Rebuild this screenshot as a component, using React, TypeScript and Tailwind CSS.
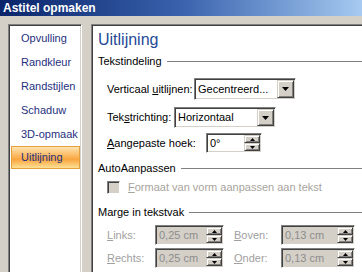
import React from "react";

const sunken =
  "border border-t-[#808080] border-l-[#808080] border-r-white border-b-white shadow-[inset_1px_1px_0_#404040,inset_-1px_-1px_0_#d4d0c8] p-px";
const sunkenBox =
  "border border-t-[#808080] border-l-[#808080] border-r-white border-b-white shadow-[inset_1px_1px_0_#404040,inset_-1px_-1px_0_#d4d0c8]";
const raised =
  "border border-t-[#d4d0c8] border-l-[#d4d0c8] border-r-[#404040] border-b-[#404040] shadow-[inset_1px_1px_0_#ffffff,inset_-1px_-1px_0_#808080] bg-[#d4d0c8]";

function DownTri({ w = 7, h = 4 }: { w?: number; h?: number }) {
  return (
    <svg width={w} height={h} viewBox={`0 0 ${w} ${h}`}>
      <polygon points={`0,0 ${w},0 ${w / 2},${h}`} fill="#000" />
    </svg>
  );
}
function UpTri({ w = 5, h = 3 }: { w?: number; h?: number }) {
  return (
    <svg width={w} height={h} viewBox={`0 0 ${w} ${h}`}>
      <polygon points={`0,${h} ${w},${h} ${w / 2},0`} fill="#000" />
    </svg>
  );
}

function Select({ className, value }: { className: string; value: string }) {
  return (
    <div className={`${sunken} ${className} bg-white flex items-stretch shrink-0`}>
      <div className="flex-1 flex items-center pl-[2px] text-black whitespace-nowrap overflow-hidden">{value}</div>
      <div className={`${raised} w-[17px] flex items-center justify-center`}>
        <DownTri />
      </div>
    </div>
  );
}

function Spinner({
  className,
  value,
  disabled,
}: {
  className: string;
  value: string;
  disabled?: boolean;
}) {
  return (
    <div
      className={`${sunken} ${className} ${disabled ? "bg-[#d4d0c8] text-[#8c8c8c]" : "bg-white text-black"} flex items-stretch shrink-0`}
    >
      <div className="flex-1 flex items-center pl-[2px] whitespace-nowrap overflow-hidden">{value}</div>
      <div className="w-[16px] flex flex-col">
        <div className={`${raised} flex-1 flex items-center justify-center`}>
          <UpTri />
        </div>
        <div className={`${raised} flex-1 flex items-center justify-center`}>
          <DownTri w={5} h={3} />
        </div>
      </div>
    </div>
  );
}

function Header({ children }: { children: React.ReactNode }) {
  return (
    <div className="h-[13px] flex items-center">
      <span className="whitespace-nowrap text-black">{children}</span>
      <div className="flex-1 h-px bg-[#808080] ml-[5px]" />
    </div>
  );
}

const navItems = ["Opvulling", "Randkleur", "Randstijlen", "Schaduw", "3D-opmaak"];

export default function App() {
  return (
    <div className="w-[362px] h-[272px] overflow-hidden bg-[#d4d0c8] font-['Liberation_Sans',Arial,sans-serif] text-[11px] leading-[13px]">
      <div className="h-[16px] bg-gradient-to-r from-[#0a246a] via-[#3a62ad] to-[#a6caf0] flex items-center pl-[3px]">
        <span className="text-white font-bold text-[12px] leading-[14px] whitespace-nowrap">Astitel opmaken</span>
      </div>
      <div className="flex pt-[8px] pl-[8px]">
        <div className={`${sunkenBox} w-[74px] h-[260px] bg-white pt-px shrink-0`}>
          {navItems.map((t) => (
            <div key={t} className="h-[24px] flex items-center pl-[12px] text-[#1f3181] whitespace-nowrap">
              {t}
            </div>
          ))}
          <div className="h-[24px] pl-[2px] pr-px">
            <div className="h-[23px] flex items-center pl-[9px] text-[#1f3181] border border-[#e3a03c] bg-[linear-gradient(to_bottom,#fde4b2_0%,#fbb458_45%,#f9a640_60%,#fde196_100%)]">
              Uitlijning
            </div>
          </div>
        </div>
        <div className="w-[9px] shrink-0" />
        <div className="border border-t-[#808080] border-l-[#808080] border-r-white border-b-white shadow-[inset_1px_1px_0_#404040] w-[290px] h-[260px] bg-white pl-[6px] shrink-0 flex flex-col">
          <div className="pt-[6px] text-[16px] leading-[18px] text-[#244a96]">Uitlijning</div>
          <div className="mt-[6px]">
            <Header>Tekstindeling</Header>
          </div>
          <div className="mt-[10px] h-[22px] flex items-center pl-[9px]">
            <span className="w-[87px] shrink-0 whitespace-nowrap">
              Verticaal <u>u</u>itlijnen:
            </span>
            <Select className="w-[102px] h-[22px]" value="Gecentreerd..." />
          </div>
          <div className="mt-[7px] h-[21px] flex items-center pl-[9px]">
            <span className="w-[67px] shrink-0 whitespace-nowrap">
              Tek<u>s</u>trichting:
            </span>
            <Select className="w-[102px] h-[21px]" value="Horizontaal" />
          </div>
          <div className="mt-[5px] h-[20px] flex items-center pl-[9px]">
            <span className="w-[99px] shrink-0 whitespace-nowrap">
              <u>A</u>angepaste hoek:
            </span>
            <Spinner className="w-[56px] h-[20px]" value="0°" />
          </div>
          <div className="mt-[9px]">
            <Header>AutoAanpassen</Header>
          </div>
          <div className="mt-[6px] h-[13px] flex items-center pl-[9px] text-[#a7a49c]">
            <div className={`${sunkenBox} w-[13px] h-[13px] bg-[#d4d0c8] shrink-0`} />
            <span className="ml-[8px] whitespace-nowrap">
              <u>F</u>ormaat van vorm aanpassen aan tekst
            </span>
          </div>
          <div className="mt-[12px]">
            <Header>Marge in tekstvak</Header>
          </div>
          <div className="mt-[6px] h-[20px] flex items-center pl-[9px] text-[#a0a0a0]">
            <span className="w-[48px] shrink-0">
              <u>L</u>inks:
            </span>
            <Spinner className="w-[69px] h-[20px]" value="0,25 cm" disabled />
            <span className="w-[47px] ml-[10px] shrink-0">
              <u>B</u>oven:
            </span>
            <Spinner className="w-[74px] h-[20px]" value="0,13 cm" disabled />
          </div>
          <div className="mt-[3px] h-[20px] flex items-center pl-[9px] text-[#a0a0a0]">
            <span className="w-[48px] shrink-0">
              <u>R</u>echts:
            </span>
            <Spinner className="w-[69px] h-[20px]" value="0,25 cm" disabled />
            <span className="w-[47px] ml-[10px] shrink-0">
              <u>O</u>nder:
            </span>
            <Spinner className="w-[74px] h-[20px]" value="0,13 cm" disabled />
          </div>
        </div>
      </div>
    </div>
  );
}
